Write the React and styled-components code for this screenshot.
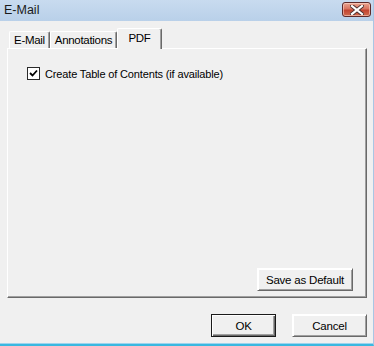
import React from "react";
import styled, { createGlobalStyle } from "styled-components";

const Global = createGlobalStyle`
  html, body { margin: 0; padding: 0; background: #f0f0f0; }
  body { font-family: "Liberation Sans", Arial, sans-serif; font-size: 11px; color: #000; }
  * { box-sizing: border-box; }
`;

const Window = styled.div`
  width: 374px;
  height: 346px;
  display: flex;
  flex-direction: column;
  background: #f0f0f0;
  border-right: 1px solid #a9c6e4;
  border-bottom: 2px solid #3ab8e0;
  box-shadow: inset 0 -1px 0 #9dd4ee;
`;

const TitleBar = styled.div`
  height: 21px;
  flex: 0 0 21px;
  display: flex;
  align-items: center;
  justify-content: space-between;
  padding: 0 2px 0 4px;
  background: linear-gradient(#c8dbef, #b9d0e9);
`;

const Title = styled.span`
  font-size: 12.5px;
  color: #1a1a1a;
  margin-top: -1px;
`;

const CloseButton = styled.div`
  width: 29px;
  height: 15px;
  margin-top: -2px;
  border: 1px solid #5e2a2a;
  border-radius: 3px;
  background: linear-gradient(#eaa692 0%, #d8735f 45%, #c24430 55%, #cf6b4e 100%);
  box-shadow: inset 0 0 0 1px rgba(255, 220, 210, 0.55);
  display: flex;
  align-items: center;
  justify-content: center;
`;

const Body = styled.div`
  flex: 1;
  display: flex;
  flex-direction: column;
  padding: 7px 6px 0 7px;
`;

const TabStrip = styled.div`
  display: flex;
  align-items: flex-end;
  height: 20px;
  padding-left: 2px;
  position: relative;
  z-index: 1;
`;

const Tab = styled.div`
  width: ${(p) => p.$w}px;
  height: ${(p) => (p.$active ? 21 : 17)}px;
  margin-bottom: ${(p) => (p.$active ? -1 : 0)}px;
  background: #f0f0f0;
  border-top: 1px solid #fff;
  border-left: 1px solid #fff;
  border-right: 1px solid #696969;
  box-shadow: inset -1px 0 0 #a0a0a0;
  border-top-left-radius: 2px;
  border-top-right-radius: 2px;
  display: flex;
  justify-content: center;
  align-items: flex-start;
  padding-top: ${(p) => (p.$active ? 3 : 2)}px;
  font-size: 11.5px;
  letter-spacing: -0.3px;
  white-space: nowrap;
`;

const Panel = styled.div`
  height: 250px;
  display: flex;
  flex-direction: column;
  border-top: 1px solid #fff;
  border-left: 1px solid #fff;
  border-right: 1px solid #696969;
  border-bottom: 1px solid #696969;
  box-shadow: inset -1px -1px 0 #a0a0a0;
  padding: 18px 13px 6px 19px;
`;

const CheckRow = styled.label`
  display: flex;
  align-items: center;
  gap: 5px;
  letter-spacing: -0.15px;
  height: 13px;
`;

const CheckBox = styled.span`
  width: 13px;
  height: 13px;
  border: 1px solid #2a2a2a;
  background: #fff;
  display: flex;
  align-items: center;
  justify-content: center;
`;

const Spacer = styled.div`
  flex: 1;
`;

const ButtonRow = styled.div`
  display: flex;
  justify-content: flex-end;
  gap: ${(p) => p.$gap || 0}px;
  padding-top: ${(p) => p.$top || 0}px;
`;

const Button = styled.div`
  width: ${(p) => p.$w}px;
  height: 23px;
  display: flex;
  align-items: center;
  justify-content: center;
  background: #f0f0f0;
  border: 1px solid ${(p) => (p.$default ? "#1a1a1a" : "#f0f0f0")};
  box-shadow: ${(p) =>
    p.$default
      ? "inset 1px 1px 0 #fff, inset -1px -1px 0 #696969, inset -2px -2px 0 #a0a0a0"
      : "inset 1px 1px 0 #fff, inset -1px -1px 0 #a0a0a0"};
  ${(p) => (!p.$default ? "border-color: #fff #696969 #696969 #fff;" : "")}
  font-size: 11.5px;
  letter-spacing: -0.2px;
`;

export default function App() {
  return (
    <>
      <Global />
      <Window>
        <TitleBar>
          <Title>E-Mail</Title>
          <CloseButton>
            <svg width="14" height="10" viewBox="0 0 14 10">
              <path
                d="M2 1 L12 9 M12 1 L2 9"
                stroke="#4a3030"
                strokeWidth="4"
                strokeLinecap="square"
              />
              <path
                d="M2 1 L12 9 M12 1 L2 9"
                stroke="#fff"
                strokeWidth="2.2"
                strokeLinecap="square"
              />
            </svg>
          </CloseButton>
        </TitleBar>
        <Body>
          <TabStrip>
            <Tab $w={41}>E-Mail</Tab>
            <Tab $w={67}>Annotations</Tab>
            <Tab $w={45} $active>
              PDF
            </Tab>
          </TabStrip>
          <Panel>
            <CheckRow>
              <CheckBox>
                <svg width="9" height="9" viewBox="0 0 9 9">
                  <path
                    d="M1 4 L3.5 6.5 L8 1.5"
                    stroke="#000"
                    strokeWidth="1.8"
                    fill="none"
                  />
                </svg>
              </CheckBox>
              Create Table of Contents (if available)
            </CheckRow>
            <Spacer />
            <ButtonRow>
              <Button $w={96}>Save as Default</Button>
            </ButtonRow>
          </Panel>
          <ButtonRow $gap={16} $top={16}>
            <Button $w={65} $default>
              OK
            </Button>
            <Button $w={75}>Cancel</Button>
          </ButtonRow>
        </Body>
      </Window>
    </>
  );
}
